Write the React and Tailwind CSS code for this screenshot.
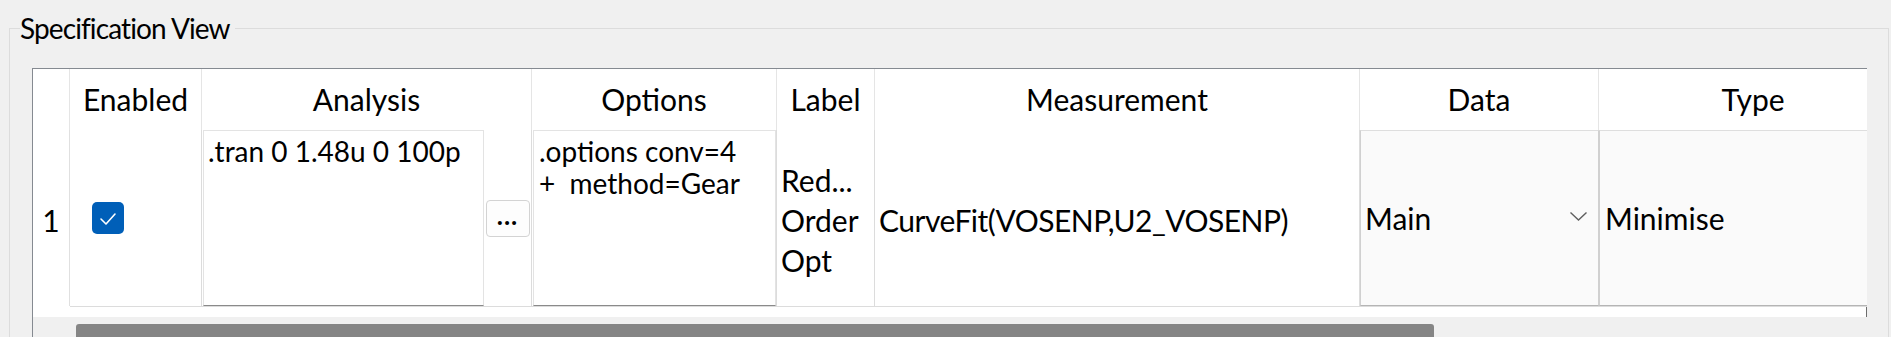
export default function App() {
  return (
    <div className="w-[1891px] h-[337px] overflow-hidden bg-[#f0f0f0] font-['Lato',sans-serif] text-black">
      <fieldset className="ml-[9px] mt-[13px] w-[1880px] h-[360px] border border-[#dcdcdc] p-0">
        <legend className="ml-[10px] pr-[5px] text-[28px] leading-[30px] tracking-[-0.9px]">Specification View</legend>
        <div className="pl-[22px] pt-[25px]">
          <div className="w-[1835px] h-[300px] border-l border-t border-[#858a91] flex flex-col overflow-hidden">
            {/* header */}
            <div className="flex h-[61px] shrink-0 bg-white text-[30px]">
              <div className="w-[37px] shrink-0 border-r border-[#e5e5e5]" />
              <div className="w-[132px] shrink-0 border-r border-[#e5e5e5] flex items-center justify-center">Enabled</div>
              <div className="w-[330px] shrink-0 border-r border-[#e5e5e5] flex items-center justify-center">Analysis</div>
              <div className="w-[245px] shrink-0 border-r border-[#e5e5e5] flex items-center justify-center">Options</div>
              <div className="w-[98px] shrink-0 border-r border-[#e5e5e5] flex items-center justify-center">Label</div>
              <div className="w-[485px] shrink-0 border-r border-[#e5e5e5] flex items-center justify-center">Measurement</div>
              <div className="w-[239px] shrink-0 border-r border-[#e5e5e5] flex items-center justify-center">Data</div>
              <div className="w-[308px] shrink-0 flex items-center justify-center">Type</div>
            </div>
            {/* body row */}
            <div className="flex h-[177px] shrink-0 bg-white text-[30px]">
              <div className="w-[37px] shrink-0 h-[176px] border-r border-[#e0e0e0] flex items-center justify-center pt-[4px]">1</div>
              <div className="w-[132px] shrink-0 border-r border-b border-[#dcdcdc] flex items-center pl-[22px]">
                <div className="w-[32px] h-[32px] rounded-[5px] bg-[#005fb8] flex items-center justify-center">
                  <svg width="32" height="32" viewBox="0 0 32 32" fill="none">
                    <polyline points="9,17 14,22 23,12" stroke="white" strokeWidth="1.6" strokeLinecap="round" strokeLinejoin="round" />
                  </svg>
                </div>
              </div>
              <div className="w-[330px] shrink-0 border-r border-b border-[#dcdcdc] flex">
                <div className="w-[281px] ml-[1px] h-full border border-[#e3e3e3] border-b-[#8a8a8a] bg-white pl-[4px] pt-[4px] text-[28px] leading-[32px] whitespace-pre">.tran 0 1.48u 0 100p</div>
                <div className="flex-1 flex items-center justify-center">
                  <div className="w-[44px] h-[37px] rounded-[4px] border border-[#d3d3d3] bg-[#fdfdfd] flex items-center justify-center text-[26px] font-bold leading-none pb-[6px] tracking-[1px]">...</div>
                </div>
              </div>
              <div className="w-[245px] shrink-0 border-r border-b border-[#dcdcdc] flex">
                <div className="flex-1 ml-[1px] h-full border border-[#e3e3e3] border-b-[#8a8a8a] bg-white pl-[5px] pt-[4px] text-[28px] leading-[32px] whitespace-pre">
                  <div>.options conv=4</div>
                  <div>+  method=Gear</div>
                </div>
              </div>
              <div className="w-[98px] shrink-0 border-r border-b border-[#dcdcdc] flex flex-col justify-center pl-[4px] pt-[3px] leading-[40px]">
                <div>Red...</div>
                <div>Order</div>
                <div>Opt</div>
              </div>
              <div className="w-[485px] shrink-0 border-r border-b border-[#dcdcdc] flex items-center pl-[4px] pt-[4px] tracking-[-0.5px]">CurveFit(VOSENP,U2_VOSENP)</div>
              <div className="w-[239px] shrink-0 border-b border-[#dcdcdc] flex">
                <div className="flex-1 h-full border-l border-r border-t border-b border-[#d0d0d0] border-t-[#dedede] border-b-[#b5b5b5] bg-[#fafafa] flex items-center justify-between pl-[4px] pr-[11px]">
                  <span>Main</span>
                  <svg width="17" height="9" viewBox="0 0 17 9" fill="none" className="mb-[3px]">
                    <polyline points="0.5,0.5 8.5,8 16.5,0.5" stroke="#5f5f5f" strokeWidth="1.4" />
                  </svg>
                </div>
              </div>
              <div className="w-[308px] shrink-0 border-b border-[#dcdcdc] flex">
                <div className="flex-1 h-full border-l border-t border-b border-[#d0d0d0] border-t-[#dedede] border-b-[#b5b5b5] bg-[#fafafa] flex items-center pl-[5px]">Minimise</div>
              </div>
            </div>
            {/* white strip */}
            <div className="h-[10px] shrink-0 bg-white border-r border-[#6d6d6d]" />
            {/* horizontal scrollbar */}
            <div className="flex-1 bg-[#f0f0f0] pt-[7px] pl-[43px]">
              <div className="w-[1358px] h-[20px] bg-[#858585] rounded-[3px]" />
            </div>
          </div>
        </div>
      </fieldset>
    </div>
  );
}
